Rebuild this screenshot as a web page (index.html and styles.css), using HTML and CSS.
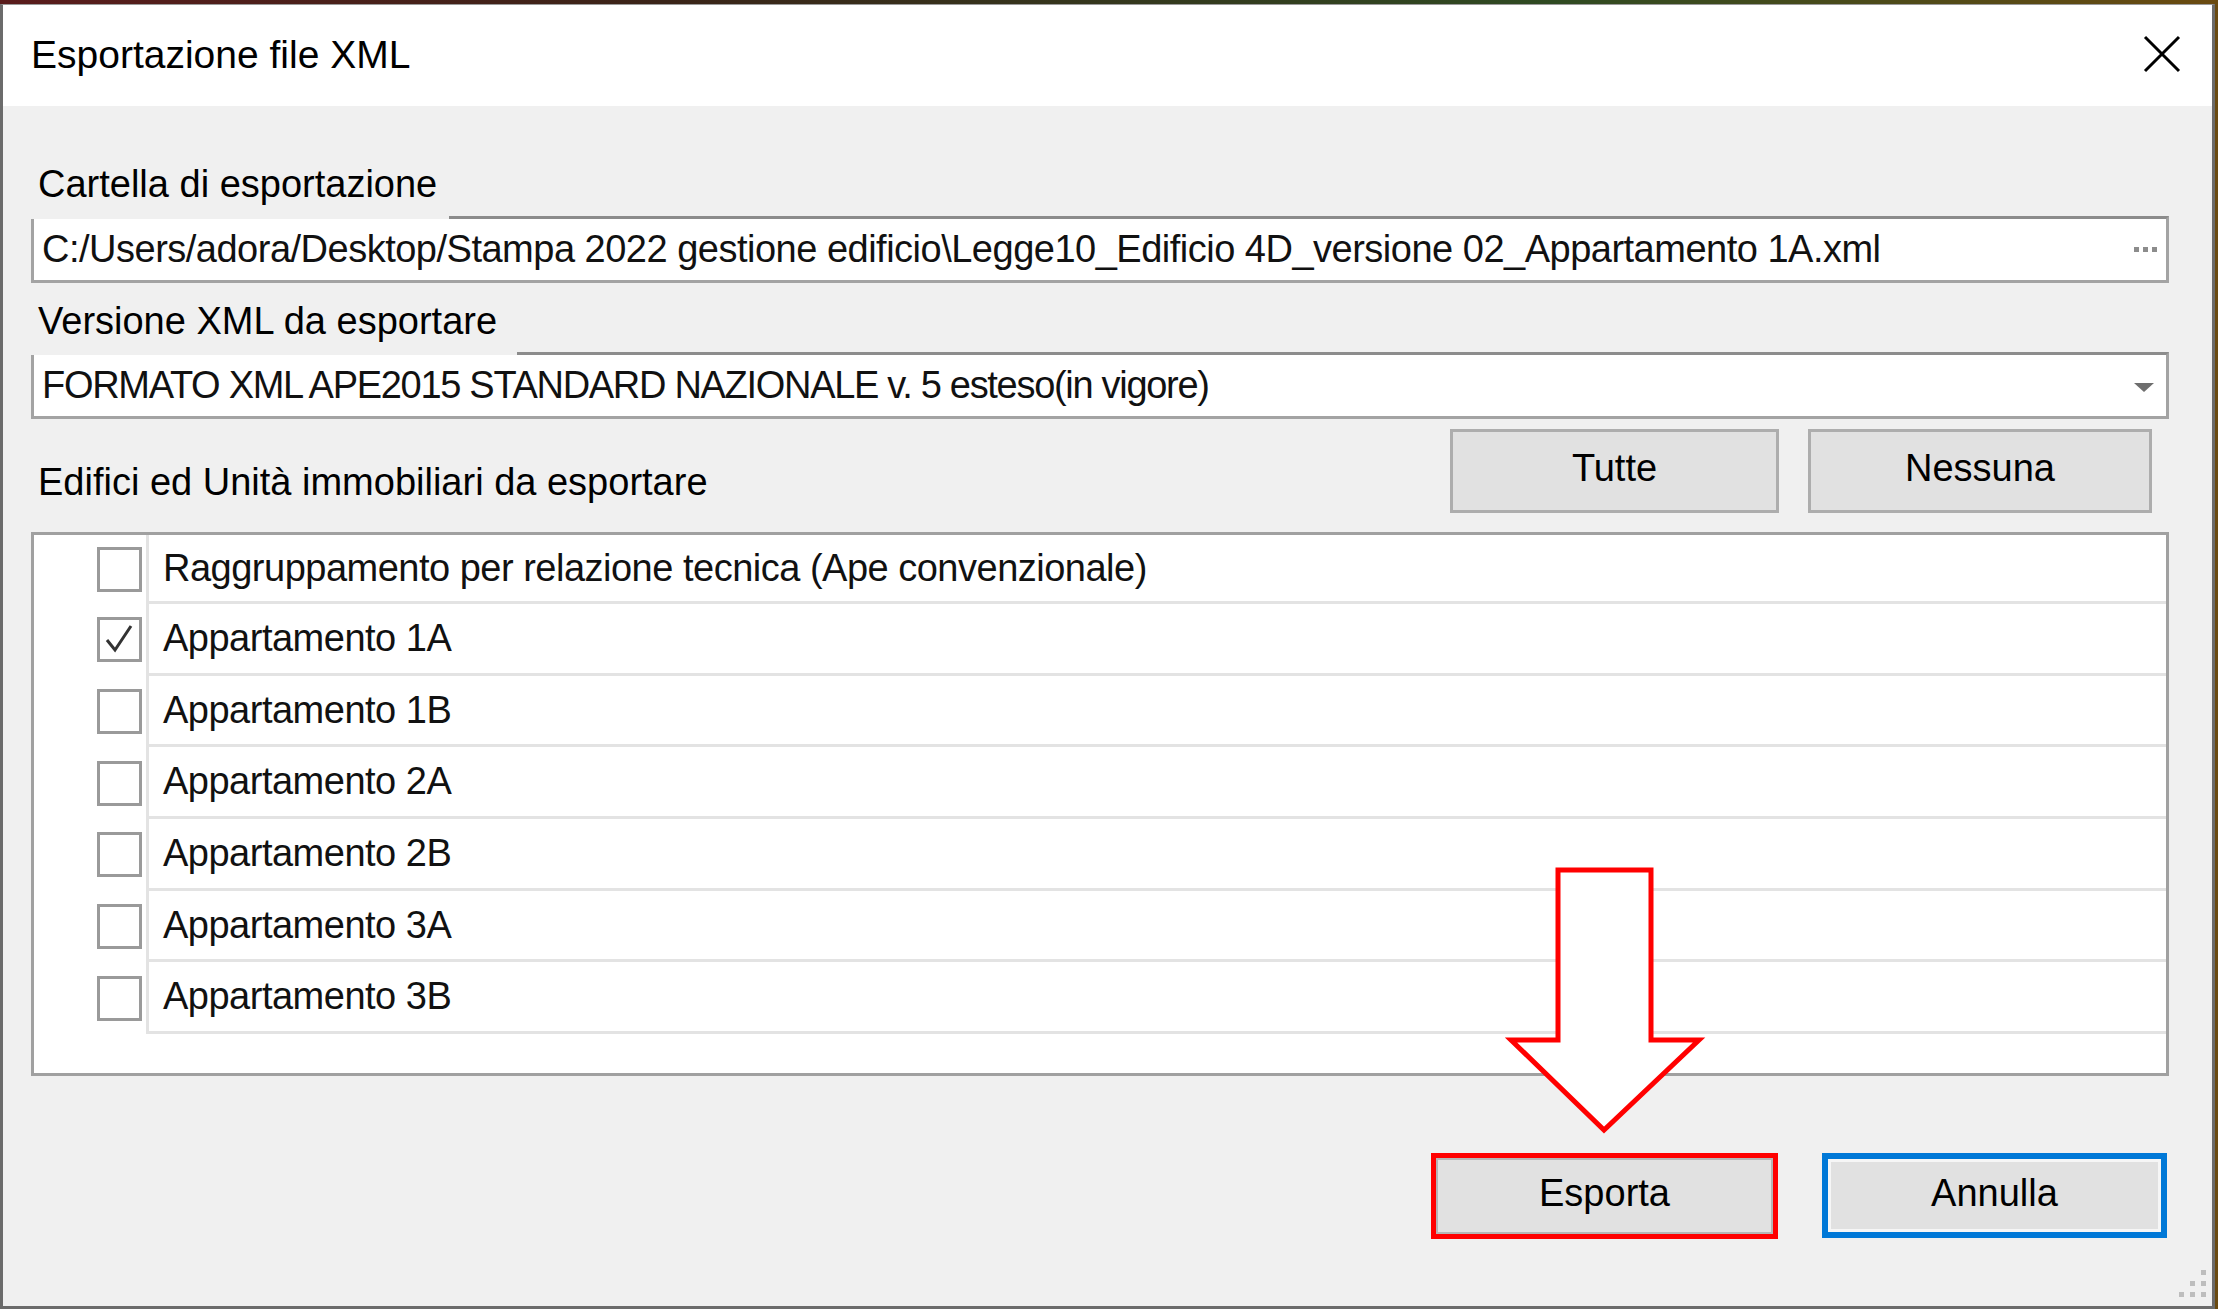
FILE: index.html
```html
<!DOCTYPE html>
<html lang="it">
<head>
    <meta charset="UTF-8"/>
    <title>Esportazione file XML</title>
    <link rel="stylesheet" href="styles.css">
</head>
<body>
<div class="window">
    <div class="titlebar">
        <span class="title">Esportazione file XML</span>
        <svg class="close" width="38" height="38" viewBox="0 0 38 38">
            <path d="M2 2 L36 36 M36 2 L2 36" stroke="#000" stroke-width="3" fill="none"/>
        </svg>
    </div>

    <div class="client">
        <div class="field-label">Cartella di esportazione</div>
        <div class="textbox">
            <span class="path">C:/Users/adora/Desktop/Stampa 2022 gestione edificio\Legge10_Edificio 4D_versione 02_Appartamento 1A.xml</span>
            <span class="dots"><i></i><i></i><i></i></span>
        </div>

        <div class="field-label second">Versione XML da esportare</div>
        <div class="textbox">
            <span class="format">FORMATO XML APE2015 STANDARD NAZIONALE v. 5 esteso(in vigore)</span>
            <svg class="drop" width="20" height="9" viewBox="0 0 20 9">
                <path d="M0 0 L20 0 L10 9 Z" fill="#6e6e6e"/>
            </svg>
        </div>

        <div class="list-head">
            <span class="caption">Edifici ed Unità immobiliari da esportare</span>
            <div class="head-buttons">
                <button class="btn all">Tutte</button>
                <button class="btn none">Nessuna</button>
            </div>
        </div>

        <div class="listbox">
            <div class="row">
                <div class="check-cell"><span class="checkbox"></span></div>
                <div class="label-cell">Raggruppamento per relazione tecnica (Ape convenzionale)</div>
            </div>
            <div class="row">
                <div class="check-cell">
                    <span class="checkbox">
                        <svg width="39" height="39" viewBox="0 0 39 39">
                            <path d="M7 20 L15 30 L31 6" stroke="#333" stroke-width="3" fill="none"/>
                        </svg>
                    </span>
                </div>
                <div class="label-cell">Appartamento 1A</div>
            </div>
            <div class="row">
                <div class="check-cell"><span class="checkbox"></span></div>
                <div class="label-cell">Appartamento 1B</div>
            </div>
            <div class="row">
                <div class="check-cell"><span class="checkbox"></span></div>
                <div class="label-cell">Appartamento 2A</div>
            </div>
            <div class="row">
                <div class="check-cell"><span class="checkbox"></span></div>
                <div class="label-cell">Appartamento 2B</div>
            </div>
            <div class="row">
                <div class="check-cell"><span class="checkbox"></span></div>
                <div class="label-cell">Appartamento 3A</div>
            </div>
            <div class="row">
                <div class="check-cell"><span class="checkbox"></span></div>
                <div class="label-cell">Appartamento 3B</div>
            </div>
        </div>

        <div class="footer">
            <button class="btn export">Esporta</button>
            <button class="btn cancel">Annulla</button>
        </div>
    </div>

    <!-- red annotation arrow pointing at Esporta -->
    <svg class="arrow" width="210" height="280" viewBox="1500 860 210 280">
        <path d="M1558 870 L1651 870 L1651 1040 L1699 1040 L1604 1130 L1511 1040 L1558 1040 Z"
              fill="#fff" stroke="#ff0000" stroke-width="5"/>
    </svg>

    <svg class="grip" width="32" height="34" viewBox="2176 1266 32 34">
        <rect x="2201" y="1270" width="5" height="5" fill="#bdbdbd"/>
        <rect x="2190" y="1281" width="5" height="5" fill="#bdbdbd"/>
        <rect x="2201" y="1281" width="5" height="5" fill="#bdbdbd"/>
        <rect x="2179" y="1292" width="5" height="5" fill="#bdbdbd"/>
        <rect x="2190" y="1292" width="5" height="5" fill="#bdbdbd"/>
        <rect x="2201" y="1292" width="5" height="5" fill="#bdbdbd"/>
    </svg>
</div>
</body>
</html>
```

FILE: styles.css
```css
body {
    margin: 0;
    background: linear-gradient(90deg, #5a1c1c 0%, #3a2418 30%, #2f4a22 70%, #6a4a10 100%);
    font-family: "Liberation Sans", Arial, sans-serif;
    color: #000;
}

.window {
    position: relative;
    margin-top: 4px;
    width: 2215px;
    height: 1305px;
    box-sizing: border-box;
    border: 3px solid #6b6b6b;
    border-top: 1px solid #9a9a9a;
    background: #f0f0f0;
    display: flex;
    flex-direction: column;
}

.titlebar {
    height: 101px;
    flex: none;
    background: #fff;
    display: flex;
    align-items: center;
    justify-content: space-between;
    padding: 0 31px 0 28px;
}

.title {
    font-size: 39px;
    margin-top: -2px;
}

.close {
    margin-top: -4px;
}

.client {
    flex: 1;
    padding: 55px 43px 0 28px;
}

.field-label {
    position: relative;
    z-index: 1;
    width: fit-content;
    background: #f0f0f0;
    font-size: 38px;
    line-height: 46px;
    padding: 0 12px 12px 7px;
}

.field-label.second {
    margin-top: 15px;
    padding-right: 20px;
    padding-bottom: 11px;
}

.textbox {
    margin-top: -3px;
    height: 67px;
    box-sizing: border-box;
    border: 3px solid #a3a3a3;
    border-top-color: #8c8c8c;
    background: #fff;
    display: flex;
    align-items: center;
    justify-content: space-between;
    padding: 0 12px 0 8px;
    font-size: 38px;
    color: #111;
    white-space: nowrap;
}

.path {
    letter-spacing: -0.5px;
}

.format {
    letter-spacing: -1.3px;
}

.dots {
    display: flex;
    gap: 4px;
    margin-right: -3px;
}

.dots i {
    width: 5px;
    height: 5px;
    background: #8c8c8c;
}

.drop {
    margin-top: 4px;
}

.list-head {
    display: flex;
    justify-content: space-between;
    align-items: flex-start;
}

.caption {
    margin: 40px 0 0 7px;
    font-size: 38px;
    line-height: 46px;
}

.head-buttons {
    display: flex;
    gap: 29px;
    margin: 10px 17px 0 0;
}

.btn {
    font-family: "Liberation Sans", Arial, sans-serif;
    font-size: 38px;
    color: #000;
    background: #e1e1e1;
    border: 3px solid #adadad;
    box-sizing: border-box;
    padding: 0 0 5px 0;
}

.btn.all {
    width: 329px;
    height: 84px;
}

.btn.none {
    width: 344px;
    height: 84px;
}

.listbox {
    margin-top: 19px;
    height: 544px;
    box-sizing: border-box;
    border: 3px solid #a0a0a0;
    background: #fff;
}

.row {
    display: flex;
    height: 71.7px;
}

.row:first-child {
    height: 69px;
}

.check-cell {
    width: 112px;
    flex: none;
    border-right: 3px solid #e3e3e3;
    display: flex;
    align-items: center;
}

.checkbox {
    margin-left: 63px;
    width: 45px;
    height: 45px;
    box-sizing: border-box;
    border: 3px solid #9a9a9a;
    background: #fff;
}

.checkbox svg {
    display: block;
}

.label-cell {
    flex: 1;
    display: flex;
    align-items: center;
    padding-left: 14px;
    border-bottom: 3px solid #e3e3e3;
    font-size: 38px;
    letter-spacing: -0.5px;
    color: #111;
}

.footer {
    display: flex;
    justify-content: flex-end;
    gap: 44px;
    margin-top: 77px;
    padding-right: 2px;
}

.btn.export {
    width: 347px;
    height: 86px;
    border: 5px solid #ff0000;
    box-shadow: inset 0 0 0 2px #b5b5b5;
}

.btn.cancel {
    width: 345px;
    height: 85px;
    border: 6px solid #0078d7;
    box-shadow: inset 0 0 0 3px #f6f6f6;
}

.arrow {
    position: absolute;
    left: 1497px;
    top: 855px;
}

.grip {
    position: absolute;
    left: 2173px;
    top: 1261px;
}
```
